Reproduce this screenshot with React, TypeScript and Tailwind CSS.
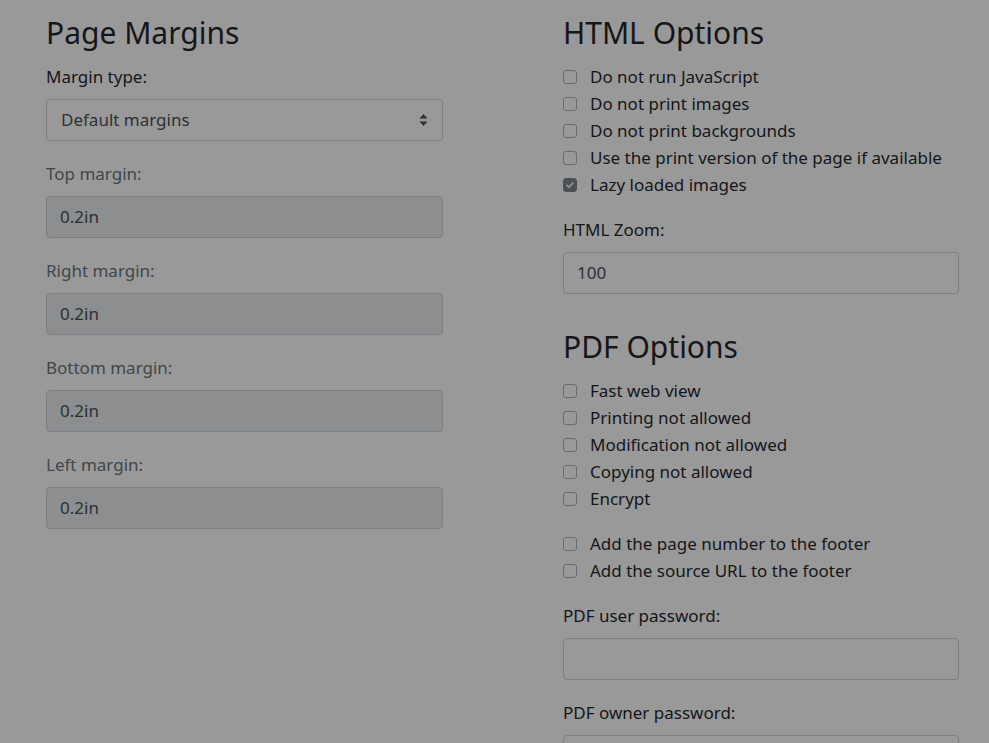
import React from 'react';

const font = { fontFamily: '"Noto Sans", "Open Sans", sans-serif' };

const Heading = ({ children, className = '' }: { children: React.ReactNode; className?: string }) => (
  <h2 className={`text-[30px] leading-[40px] font-normal text-[#141619] mb-[10px] ${className}`}>{children}</h2>
);

const Label = ({ children, muted }: { children: React.ReactNode; muted?: boolean }) => (
  <div className={`text-[17px] leading-[27px] mb-[9px] ${muted ? 'text-[#41464b]' : 'text-[#141619]'}`}>{children}</div>
);

const TextInput = ({ value, disabled }: { value: string; disabled?: boolean }) => (
  <div
    className={`h-[42px] rounded-[4px] border border-[#7c7f83] px-[13px] flex items-center text-[17px] text-[#2c3034] ${
      disabled ? 'bg-[#8c8e8f]' : 'bg-[#999999]'
    }`}
  >
    {value}
  </div>
);

const Check = ({ label, checked }: { label: string; checked?: boolean }) => (
  <div className="flex items-center h-[27px] text-[17px] text-[#141619]">
    <span
      className={`w-[14px] h-[14px] rounded-[3px] border flex items-center justify-center mr-[13px] ${
        checked ? 'bg-[#4b5157] border-[#4b5157]' : 'border-[#686c70] bg-[#999999]'
      }`}
    >
      {checked && (
        <svg width="10" height="10" viewBox="0 0 10 10" fill="none">
          <path d="M2 5.2 L4 7.2 L8 2.8" stroke="#999999" strokeWidth="1.6" strokeLinecap="round" strokeLinejoin="round" />
        </svg>
      )}
    </span>
    {label}
  </div>
);

const Group = ({ children }: { children: React.ReactNode }) => <div className="mb-[19px]">{children}</div>;

export default function App() {
  return (
    <div className="w-[989px] h-[743px] overflow-hidden bg-[#999999]" style={font}>
      <div className="flex pt-[13px] pl-[46px] gap-[120px]">
        <div className="w-[397px]">
          <Heading>Page Margins</Heading>
          <Group>
            <Label>Margin type:</Label>
            <div className="h-[42px] rounded-[4px] border border-[#7c7f83] pl-[14px] pr-[14px] flex items-center justify-between text-[17px] text-[#2c3034]">
              <span>Default margins</span>
              <svg width="9" height="14" viewBox="0 0 9 14">
                <path d="M4.5 1 L8.5 5.5 H0.5 Z" fill="#2c3034" />
                <path d="M4.5 13 L8.5 8.5 H0.5 Z" fill="#2c3034" />
              </svg>
            </div>
          </Group>
          <Group>
            <Label muted>Top margin:</Label>
            <TextInput value="0.2in" disabled />
          </Group>
          <Group>
            <Label muted>Right margin:</Label>
            <TextInput value="0.2in" disabled />
          </Group>
          <Group>
            <Label muted>Bottom margin:</Label>
            <TextInput value="0.2in" disabled />
          </Group>
          <Group>
            <Label muted>Left margin:</Label>
            <TextInput value="0.2in" disabled />
          </Group>
        </div>

        <div className="w-[396px]">
          <Heading>HTML Options</Heading>
          <div className="mb-[18px]">
            <Check label="Do not run JavaScript" />
            <Check label="Do not print images" />
            <Check label="Do not print backgrounds" />
            <Check label="Use the print version of the page if available" />
            <Check label="Lazy loaded images" checked />
          </div>
          <Group>
            <Label>HTML Zoom:</Label>
            <TextInput value="100" />
          </Group>

          <Heading className="mt-[33px]">PDF Options</Heading>
          <div className="mb-[18px]">
            <Check label="Fast web view" />
            <Check label="Printing not allowed" />
            <Check label="Modification not allowed" />
            <Check label="Copying not allowed" />
            <Check label="Encrypt" />
          </div>
          <div className="mb-[18px]">
            <Check label="Add the page number to the footer" />
            <Check label="Add the source URL to the footer" />
          </div>
          <Group>
            <Label>PDF user password:</Label>
            <TextInput value="" />
          </Group>
          <Group>
            <Label>PDF owner password:</Label>
            <TextInput value="" />
          </Group>
        </div>
      </div>
    </div>
  );
}
